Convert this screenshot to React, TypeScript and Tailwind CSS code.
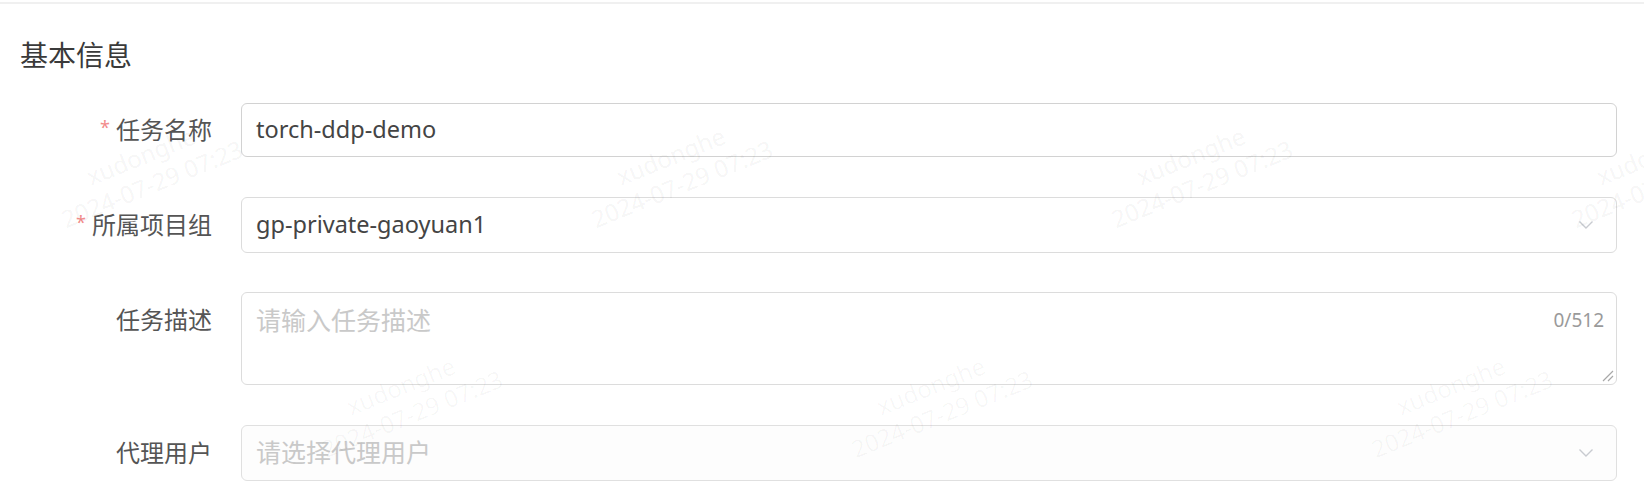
import React from "react";

const font = { fontFamily: '"Noto Sans", "Noto Sans CJK SC", sans-serif' };

function Chevron() {
  return (
    <svg width="16" height="10" viewBox="0 0 16 10" className="shrink-0">
      <path d="M1.5 1.5 L8 8 L14.5 1.5" fill="none" stroke="#c8cbd0" strokeWidth="1.4" />
    </svg>
  );
}

function Label({ text, required, top }: { text: string; required?: boolean; top?: boolean }) {
  return (
    <div
      className={`w-[212px] shrink-0 flex justify-end text-[24px] leading-[32px] text-[#555555] ${top ? "items-start pt-[12px]" : "items-center"}`}
    >
      {required && <span className="text-[#f28b8b] text-[18px] mr-[6px] mt-[-6px]">*</span>}
      <span>{text}</span>
    </div>
  );
}

function Watermark({ x, y, faint }: { x: number; y: number; faint?: boolean }) {
  return (
    <div
      className={`absolute pointer-events-none text-[24px] leading-[30px] text-center -rotate-[22deg] whitespace-nowrap ${faint ? "text-black/[0.035]" : "text-black/[0.055]"}`}
      style={{ left: x, top: y }}
    >
      <div>xudonghe</div>
      <div>2024-07-29 07:23</div>
    </div>
  );
}

function Watermark2({ x, y }: { x: number; y: number }) {
  return (
    <div
      className="absolute pointer-events-none text-[22px] leading-[28px] text-black/[0.025] -rotate-[55deg] whitespace-nowrap"
      style={{ left: x, top: y }}
    >
      GAOYUANKF1.2024-07-29
    </div>
  );
}

export default function App() {
  return (
    <div className="w-[1644px] h-[488px] bg-white relative overflow-hidden" style={font}>
      <div className="h-[2px]" />
      <div className="h-[2px] bg-[#f0f0f0]" />
      <div className="pl-[20px] pt-[33px] text-[28px] leading-[36px] text-[#3a3a3a]">基本信息</div>

      <div className="flex flex-col pt-[30px] pr-[27px]">
        <div className="flex h-[54px]">
          <Label text="任务名称" required />
          <div className="ml-[29px] flex-1 border border-[#d2d2d2] rounded-[6px] flex items-center px-[14px] text-[23.5px] text-[#444444]">
            torch-ddp-demo
          </div>
        </div>

        <div className="flex h-[56px] mt-[40px]">
          <Label text="所属项目组" required />
          <div className="ml-[29px] flex-1 border border-[#dcdcdc] rounded-[6px] flex items-center justify-between pl-[14px] pr-[22px] text-[23.5px] text-[#444444]">
            <span>gp-private-gaoyuan1</span>
            <Chevron />
          </div>
        </div>

        <div className="flex h-[93px] mt-[39px]">
          <Label text="任务描述" top />
          <div className="ml-[29px] flex-1 border border-[#dcdcdc] rounded-[6px] relative flex items-start justify-between pl-[14px] pr-[12px] pt-[11px]">
            <span className="text-[25px] leading-[32px] text-[#c9c9c9]">请输入任务描述</span>
            <span className="text-[19px] leading-[32px] text-[#9a9a9a]">0/512</span>
            <svg width="14" height="14" viewBox="0 0 14 14" className="absolute right-[2px] bottom-[2px]">
              <path d="M13 3 L3 13 M13 8 L8 13" stroke="#a8a8a8" strokeWidth="1.2" />
            </svg>
          </div>
        </div>

        <div className="flex h-[56px] mt-[40px]">
          <Label text="代理用户" />
          <div className="ml-[29px] flex-1 border border-[#e0e0e0] rounded-[6px] bg-[#fdfdfd] flex items-center justify-between pl-[14px] pr-[22px]">
            <span className="text-[25px] text-[#c9c9c9]">请选择代理用户</span>
            <Chevron />
          </div>
        </div>
      </div>

      <Watermark x={50} y={140} />
      <Watermark x={580} y={140} />
      <Watermark x={1100} y={140} />
      <Watermark x={1560} y={140} />
      <Watermark x={310} y={370} faint />
      <Watermark x={840} y={370} faint />
      <Watermark x={1360} y={370} faint />
      <Watermark2 x={170} y={-40} />
      <Watermark2 x={700} y={-40} />
      <Watermark2 x={1220} y={-40} />
      <Watermark2 x={150} y={300} />
      <Watermark2 x={1110} y={300} />
    </div>
  );
}
